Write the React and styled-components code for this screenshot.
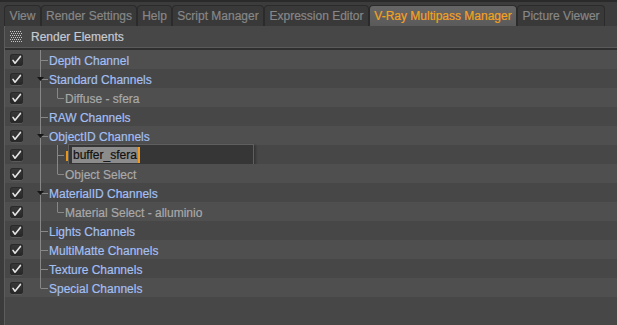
import React from 'react'
import styled, { createGlobalStyle } from 'styled-components'

const GlobalStyle = createGlobalStyle`
  html, body {
    margin: 0;
    padding: 0;
    background: #3b3b3b;
  }
  body {
    font-family: "Liberation Sans", Arial, sans-serif;
    font-size: 12px;
    -webkit-text-stroke: 0.2px;
  }
`

const tabs = [
  { label: 'View', width: 37 },
  { label: 'Render Settings', width: 96 },
  { label: 'Help', width: 35 },
  { label: 'Script Manager', width: 92 },
  { label: 'Expression Editor', width: 105 },
  { label: 'V-Ray Multipass Manager', width: 148, active: true },
  { label: 'Picture Viewer', width: 88 },
]

// top-level rows hang off the trunk; child rows get a second branch
const rows = [
  { label: 'Depth Channel', kind: 'top' },
  { label: 'Standard Channels', kind: 'top', open: true },
  { label: 'Diffuse - sfera', kind: 'child', branch: 'half' },
  { label: 'RAW Channels', kind: 'top' },
  { label: 'ObjectID Channels', kind: 'top', open: true },
  { label: 'buffer_sfera', kind: 'child', branch: 'full', editing: true },
  { label: 'Object Select', kind: 'child', branch: 'half' },
  { label: 'MaterialID Channels', kind: 'top', open: true },
  { label: 'Material Select - alluminio', kind: 'child', branch: 'half' },
  { label: 'Lights Channels', kind: 'top' },
  { label: 'MultiMatte Channels', kind: 'top' },
  { label: 'Texture Channels', kind: 'top' },
  { label: 'Special Channels', kind: 'top', last: true },
]

function GridIcon() {
  const dots = []
  for (let r = 0; r < 6; r++) {
    for (let c = 0; c < 6; c++) {
      dots.push(<rect key={r + '-' + c} x={c * 2 + (r % 2)} y={r * 2} width="1" height="1" fill="#c4c4c4" />)
    }
  }
  return (
    <svg width="13" height="12" viewBox="0 0 13 12">
      {dots}
    </svg>
  )
}

function CheckBox() {
  return (
    <Box>
      <svg width="13" height="12" viewBox="0 0 13 12">
        <path d="M3 6.4 L5 9.2 L10.4 2.4" fill="none" stroke="#e6e6e6" strokeWidth="1.6" strokeLinecap="round" strokeLinejoin="round" />
      </svg>
    </Box>
  )
}

function Connector({ row }) {
  const child = row.kind === 'child'
  const w = child ? 30 : 14
  const line = '#878787'
  return (
    <svg width={w} height="19" viewBox={`0 0 ${w} 19`} style={{ flex: 'none' }}>
      <line x1="5.5" y1="0" x2="5.5" y2={row.last ? 10 : 19} stroke={line} />
      {!child && <line x1="5.5" y1="10.5" x2="13" y2="10.5" stroke={line} />}
      {child && <line x1="22.5" y1="0" x2="22.5" y2={row.branch === 'full' ? 19 : 10} stroke={line} />}
      {child && <line x1="22.5" y1="10.5" x2="29" y2="10.5" stroke={line} />}
      {row.open && <path d="M2 8 L9 8 L5.5 12 Z" fill="#161616" />}
    </svg>
  )
}

export default function App() {
  return (
    <Page>
      <GlobalStyle />
      <TabBar>
        {tabs.map((t) => (
          <Tab key={t.label} $active={t.active} $width={t.width}>
            {t.label}
          </Tab>
        ))}
      </TabBar>
      <Panel>
        <Header>
          <GridIcon />
          <HeaderTitle>Render Elements</HeaderTitle>
        </Header>
        <List>
          {rows.map((row, i) => (
            <Row key={row.label} $odd={i % 2 === 0}>
              <CheckCell>
                <CheckBox />
              </CheckCell>
              <Connector row={row} />
              {row.editing ? (
                <>
                  <Caret />
                  <Editor>
                    <Selected>{row.label}</Selected>
                    <Cursor />
                  </Editor>
                </>
              ) : (
                <Label $child={row.kind === 'child'}>{row.label}</Label>
              )}
            </Row>
          ))}
        </List>
      </Panel>
    </Page>
  )
}

const Page = styled.div`
  width: 617px;
  height: 325px;
  display: flex;
  flex-direction: column;
  background: #3b3b3b;
  overflow: hidden;
`

const TabBar = styled.div`
  height: 26px;
  box-sizing: border-box;
  display: flex;
  align-items: flex-end;
  padding-left: 4px;
  background: #3c3c3c;
  border-top: 2px solid #2a2a2a;
  flex: none;
`

const Tab = styled.div`
  width: ${(p) => p.$width}px;
  height: 21px;
  box-sizing: border-box;
  display: flex;
  align-items: center;
  justify-content: center;
  border: 1px solid #2b2b2b;
  border-bottom: none;
  border-radius: 4px 4px 0 0;
  background: ${(p) => (p.$active ? 'linear-gradient(#666666, #5a5a5a)' : '#393939')};
  color: ${(p) => (p.$active ? '#f4a21f' : '#878787')};
  font-size: 12px;
  white-space: nowrap;
`

const Panel = styled.div`
  flex: 1;
  margin-left: 4px;
  border-left: 1px solid #5c5c5c;
  background: #474747;
  display: flex;
  flex-direction: column;
`

const Header = styled.div`
  height: 21px;
  display: flex;
  align-items: center;
  gap: 8px;
  padding-left: 5px;
  border-bottom: 1px solid #5a5a5a;
  box-shadow: 0 2px 0 #2f2f2f;
  margin-bottom: 2px;
`

const HeaderTitle = styled.span`
  color: #c6cad2;
  font-size: 12px;
`

const List = styled.div`
  display: flex;
  flex-direction: column;
`

const Row = styled.div`
  height: 19px;
  display: flex;
  align-items: center;
  background: ${(p) => (p.$odd ? '#4f4f4f' : '#474747')};
`

const CheckCell = styled.div`
  width: 30px;
  height: 19px;
  display: flex;
  align-items: center;
  padding-left: 5px;
  box-sizing: border-box;
  flex: none;
`

const Box = styled.div`
  width: 13px;
  height: 12px;
  border-radius: 3px;
  background: linear-gradient(#3a3a3a, #262626);
  box-shadow: inset 0 0 0 1px #2a2a2a, 0 1px 0 #5a5a5a;
  display: flex;
  margin-top: 1px;
`

const Label = styled.span`
  color: ${(p) => (p.$child ? '#a9a9a9' : '#a3bff2')};
  font-size: 12px;
  padding-left: 0;
  padding-top: 2px;
  white-space: nowrap;
`

const Caret = styled.div`
  width: 2px;
  height: 10px;
  margin-left: 1px;
  margin-top: 2px;
  background: #e8951c;
  flex: none;
`

const Editor = styled.div`
  width: 186px;
  height: 22px;
  box-sizing: border-box;
  margin-top: 1px;
  flex: none;
  display: flex;
  align-items: center;
  padding-left: 3px;
  background: #363636;
  border: 1px solid #5f5f5f;
  box-shadow: 2px 1px 2px rgba(0, 0, 0, 0.25);
`

const Selected = styled.span`
  background: #8c8c8c;
  color: #111111;
  font-size: 12px;
  line-height: 16px;
  padding: 0 1px;
`

const Cursor = styled.span`
  width: 2px;
  height: 16px;
  background: #f39a1c;
`
